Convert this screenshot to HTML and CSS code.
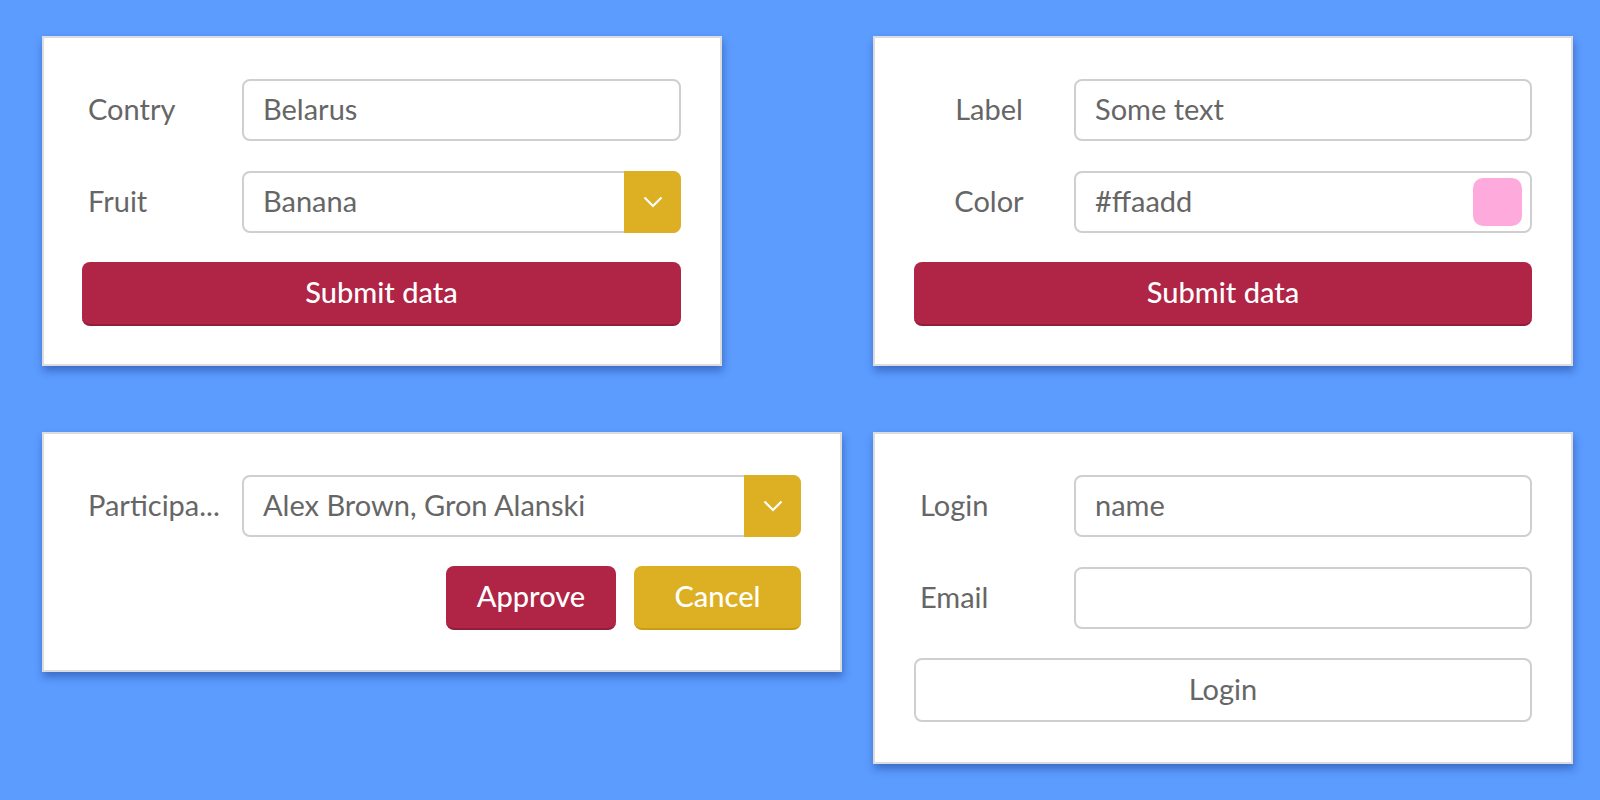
FILE: index.html
```html
<!DOCTYPE html>
<html lang="en">
<head>
<meta charset="utf-8">
<title>Forms</title>
<link rel="stylesheet" href="styles.css">
</head>
<body>
<main class="board">
  <section class="card card-country">
    <div class="row">
      <label class="label">Contry</label>
      <input class="field" type="text" value="Belarus">
    </div>
    <div class="row">
      <label class="label">Fruit</label>
      <div class="field select">
        <span class="select-text">Banana</span>
        <span class="select-btn"><svg width="20" height="12" viewBox="0 0 20 12"><polyline points="1.5,1.5 10,10 18.5,1.5" fill="none" stroke="#fff" stroke-width="2.2"/></svg></span>
      </div>
    </div>
    <button class="btn btn-red btn-full">Submit data</button>
  </section>

  <section class="card card-color">
    <div class="row">
      <label class="label label-center">Label</label>
      <input class="field" type="text" value="Some text">
    </div>
    <div class="row">
      <label class="label label-center">Color</label>
      <div class="field color-field">
        <span class="select-text">#ffaadd</span>
        <span class="swatch"></span>
      </div>
    </div>
    <button class="btn btn-red btn-full">Submit data</button>
  </section>

  <section class="card card-participants">
    <div class="row">
      <label class="label">Participa...</label>
      <div class="field select">
        <span class="select-text">Alex Brown, Gron Alanski</span>
        <span class="select-btn"><svg width="20" height="12" viewBox="0 0 20 12"><polyline points="1.5,1.5 10,10 18.5,1.5" fill="none" stroke="#fff" stroke-width="2.2"/></svg></span>
      </div>
    </div>
    <div class="actions">
      <button class="btn btn-red btn-approve">Approve</button>
      <button class="btn btn-yellow btn-cancel">Cancel</button>
    </div>
  </section>

  <section class="card card-login">
    <div class="row">
      <label class="label">Login</label>
      <input class="field" type="text" value="name">
    </div>
    <div class="row">
      <label class="label">Email</label>
      <input class="field" type="text" value="">
    </div>
    <button class="btn btn-plain btn-full">Login</button>
  </section>
</main>
</body>
</html>
```

FILE: styles.css
```css
* { box-sizing: border-box; }

html, body {
  margin: 0;
  padding: 0;
  height: 100%;
}

body {
  background: #5c9cff;
  font-family: Lato, "PT Sans", "Noto Sans", sans-serif;
  color: #666;
  overflow: hidden;
}

.board {
  display: grid;
  grid-template-columns: 831px 700px;
  grid-template-rows: 330px auto;
  row-gap: 66px;
  padding: 36px 0 0 42px;
  align-items: start;
}

.card {
  background: #fff;
  border: 2px solid #dcdcdc;
  box-shadow: 1px 5px 8px rgba(20, 50, 130, 0.45);
  padding: 41px 39px 38px 38px;
  display: flex;
  flex-direction: column;
}

.card-country { width: 680px; height: 330px; }
.card-color { width: 700px; height: 330px; padding-left: 39px; }
.card-participants { width: 800px; height: 240px; }
.card-login { width: 700px; height: 332px; padding-left: 39px; }

.row {
  display: flex;
  align-items: center;
  height: 62px;
  margin-bottom: 30px;
}

.row + .row { margin-bottom: 29px; }

.label {
  flex: none;
  width: 150px;
  margin-right: 10px;
  padding: 0 6px 3px;
  font-size: 29px;
  line-height: 36px;
  color: #666;
  white-space: nowrap;
}

.label-center { text-align: center; }

.field {
  flex: 1;
  min-width: 0;
  height: 62px;
  border: 2px solid #cfcfcf;
  border-radius: 8px;
  background: #fff;
  padding: 0 19px 3px;
  font-family: inherit;
  font-size: 29px;
  color: #666;
  outline: none;
}

.select,
.color-field {
  display: flex;
  align-items: center;
}

.select { padding-right: 0; padding-bottom: 0; }
.color-field { padding-bottom: 0; padding-right: 8px; }

.select-text {
  flex: 1;
  white-space: nowrap;
  overflow: hidden;
  line-height: 36px;
  padding-bottom: 3px;
}

.select-btn {
  flex: none;
  align-self: stretch;
  width: 57px;
  margin: -2px -2px -2px 0;
  background: #dcb022;
  border-radius: 0 8px 8px 0;
  display: flex;
  align-items: center;
  justify-content: center;
}

.swatch {
  flex: none;
  width: 49px;
  height: 48px;
  border-radius: 10px;
  background: #ffaadd;
}

.btn {
  height: 64px;
  border-radius: 8px;
  font-family: inherit;
  font-size: 29px;
  font-weight: 500;
  padding: 0 0 4px;
  cursor: pointer;
}

.btn-full { width: 100%; }

.btn-red {
  background: #b02445;
  color: #fff;
  border: none;
  border-bottom: 2px solid #951c38;
}

.btn-yellow {
  background: #dcb022;
  color: #fff;
  border: none;
  border-bottom: 2px solid #c99d12;
}

.btn-plain {
  background: #fff;
  color: #666;
  border: 2px solid #cfcfcf;
  font-weight: 400;
}

.actions {
  display: flex;
  justify-content: flex-end;
  gap: 18px;
  margin-top: -1px;
}

.btn-approve { width: 170px; }
.btn-cancel { width: 167px; }
```
